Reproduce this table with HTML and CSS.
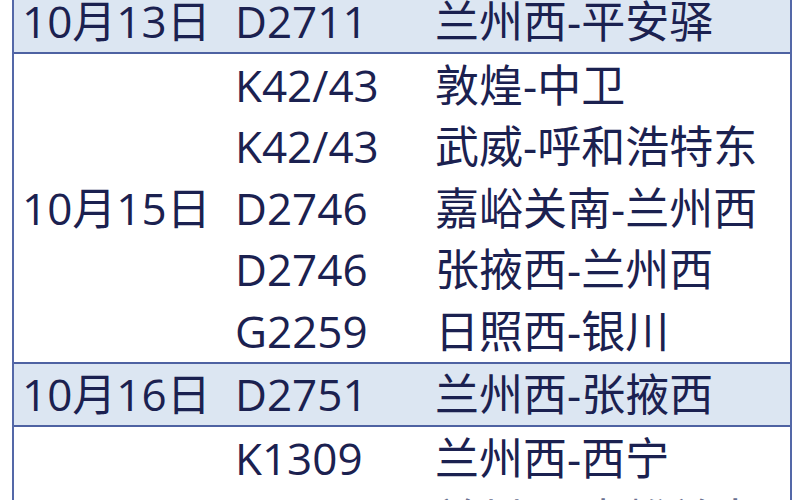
FILE: index.html
```html
<!DOCTYPE html>
<html lang="zh-CN">
<head>
<meta charset="utf-8">
<title>列车停运表</title>
<link rel="stylesheet" href="styles.css">
</head>
<body>
<div class="table">
  <div class="group shaded first">
    <div class="date">10月13日</div>
    <div class="rows">
      <div class="row"><span class="train">D2711</span><span class="route">兰州西-平安驿</span></div>
    </div>
  </div>
  <div class="group">
    <div class="date">10月15日</div>
    <div class="rows">
      <div class="row"><span class="train">K42/43</span><span class="route">敦煌-中卫</span></div>
      <div class="row"><span class="train">K42/43</span><span class="route">武威-呼和浩特东</span></div>
      <div class="row"><span class="train">D2746</span><span class="route">嘉峪关南-兰州西</span></div>
      <div class="row"><span class="train">D2746</span><span class="route">张掖西-兰州西</span></div>
      <div class="row"><span class="train">G2259</span><span class="route">日照西-银川</span></div>
    </div>
  </div>
  <div class="group shaded">
    <div class="date">10月16日</div>
    <div class="rows">
      <div class="row"><span class="train">D2751</span><span class="route">兰州西-张掖西</span></div>
    </div>
  </div>
  <div class="group">
    <div class="date"></div>
    <div class="rows">
      <div class="row"><span class="train">K1309</span><span class="route">兰州西-西宁</span></div>
      <div class="row faint"><span class="train">K1310</span><span class="route">兰州西-嘉峪关南</span></div>
    </div>
  </div>
</div>
</body>
</html>
```
FILE: styles.css
```css
html, body {
  margin: 0;
  padding: 0;
  background: #ffffff;
  overflow: hidden;
}

body {
  width: 800px;
  height: 500px;
  font-family: "Open Sans", "Noto Sans CJK SC", sans-serif;
  color: #1b2150;
  line-height: 1;
}

.table {
  margin: -9.5px 0 0 12px;
  width: 776px;
  border-left: 2px solid #5468a8;
  border-right: 2px solid #5468a8;
}

.group {
  display: grid;
  grid-template-columns: 215px 1fr;
  border-top: 2px solid #4e62a2;
}

.group.first {
  border-top: none;
}

.shaded {
  background: #dce6f2;
}

.date {
  display: flex;
  align-items: center;
  padding-left: 8px;
  font-size: 44px;
  white-space: nowrap;
}

.rows {
  display: flex;
  flex-direction: column;
}

.row {
  display: grid;
  grid-template-columns: 200px 1fr;
  height: 61.5px;
  align-items: center;
  font-size: 44px;
  white-space: nowrap;
}

.row.faint {
  color: #6a7090;
}

.train {
  padding-left: 6px;
}

.route {
  padding-left: 6px;
}
```
